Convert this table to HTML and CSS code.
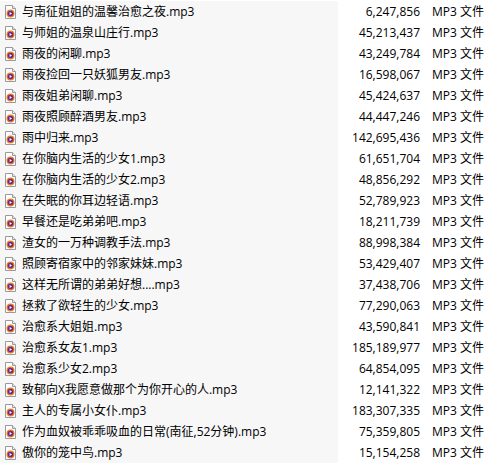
FILE: index.html
```html
<!DOCTYPE html>
<html>
<head>
<meta charset="utf-8">
<link rel="stylesheet" href="styles.css">
</head>
<body>
<svg width="0" height="0" class="defs">
  <defs>
    <symbol id="mp3" viewBox="0 0 11 14">
      <path d="M0.5 0.5 H7.5 L10.5 3.5 V13.5 H0.5 Z" fill="#fff" stroke="#9a9a9a"/>
      <path d="M7.5 0.5 V3.5 H10.5" fill="#e8e8e8" stroke="#9a9a9a"/>
      <circle cx="5.5" cy="8.5" r="4" fill="#f07a1c"/>
      <circle cx="5.5" cy="8.5" r="2.8" fill="#6a2a8a"/>
      <path d="M4.6 7 L7 8.5 L4.6 10 Z" fill="#fff"/>
    </symbol>
  </defs>
</svg>
<div class="list">
  <div class="row"><div class="name"><svg class="ic"><use href="#mp3"/></svg><span>与南征姐姐的温馨治愈之夜.mp3</span></div><div class="size">6,247,856</div><div class="type">MP3 文件</div></div>
  <div class="row"><div class="name"><svg class="ic"><use href="#mp3"/></svg><span>与师姐的温泉山庄行.mp3</span></div><div class="size">45,213,437</div><div class="type">MP3 文件</div></div>
  <div class="row"><div class="name"><svg class="ic"><use href="#mp3"/></svg><span>雨夜的闲聊.mp3</span></div><div class="size">43,249,784</div><div class="type">MP3 文件</div></div>
  <div class="row"><div class="name"><svg class="ic"><use href="#mp3"/></svg><span>雨夜捡回一只妖狐男友.mp3</span></div><div class="size">16,598,067</div><div class="type">MP3 文件</div></div>
  <div class="row"><div class="name"><svg class="ic"><use href="#mp3"/></svg><span>雨夜姐弟闲聊.mp3</span></div><div class="size">45,424,637</div><div class="type">MP3 文件</div></div>
  <div class="row"><div class="name"><svg class="ic"><use href="#mp3"/></svg><span>雨夜照顾醉酒男友.mp3</span></div><div class="size">44,447,246</div><div class="type">MP3 文件</div></div>
  <div class="row"><div class="name"><svg class="ic"><use href="#mp3"/></svg><span>雨中归来.mp3</span></div><div class="size">142,695,436</div><div class="type">MP3 文件</div></div>
  <div class="row"><div class="name"><svg class="ic"><use href="#mp3"/></svg><span>在你脑内生活的少女1.mp3</span></div><div class="size">61,651,704</div><div class="type">MP3 文件</div></div>
  <div class="row"><div class="name"><svg class="ic"><use href="#mp3"/></svg><span>在你脑内生活的少女2.mp3</span></div><div class="size">48,856,292</div><div class="type">MP3 文件</div></div>
  <div class="row"><div class="name"><svg class="ic"><use href="#mp3"/></svg><span>在失眠的你耳边轻语.mp3</span></div><div class="size">52,789,923</div><div class="type">MP3 文件</div></div>
  <div class="row"><div class="name"><svg class="ic"><use href="#mp3"/></svg><span>早餐还是吃弟弟吧.mp3</span></div><div class="size">18,211,739</div><div class="type">MP3 文件</div></div>
  <div class="row"><div class="name"><svg class="ic"><use href="#mp3"/></svg><span>渣女的一万种调教手法.mp3</span></div><div class="size">88,998,384</div><div class="type">MP3 文件</div></div>
  <div class="row"><div class="name"><svg class="ic"><use href="#mp3"/></svg><span>照顾寄宿家中的邻家妹妹.mp3</span></div><div class="size">53,429,407</div><div class="type">MP3 文件</div></div>
  <div class="row"><div class="name"><svg class="ic"><use href="#mp3"/></svg><span>这样无所谓的弟弟好想....mp3</span></div><div class="size">37,438,706</div><div class="type">MP3 文件</div></div>
  <div class="row"><div class="name"><svg class="ic"><use href="#mp3"/></svg><span>拯救了欲轻生的少女.mp3</span></div><div class="size">77,290,063</div><div class="type">MP3 文件</div></div>
  <div class="row"><div class="name"><svg class="ic"><use href="#mp3"/></svg><span>治愈系大姐姐.mp3</span></div><div class="size">43,590,841</div><div class="type">MP3 文件</div></div>
  <div class="row"><div class="name"><svg class="ic"><use href="#mp3"/></svg><span>治愈系女友1.mp3</span></div><div class="size">185,189,977</div><div class="type">MP3 文件</div></div>
  <div class="row"><div class="name"><svg class="ic"><use href="#mp3"/></svg><span>治愈系少女2.mp3</span></div><div class="size">64,854,095</div><div class="type">MP3 文件</div></div>
  <div class="row"><div class="name"><svg class="ic"><use href="#mp3"/></svg><span>致郁向X我愿意做那个为你开心的人.mp3</span></div><div class="size">12,141,322</div><div class="type">MP3 文件</div></div>
  <div class="row"><div class="name"><svg class="ic"><use href="#mp3"/></svg><span>主人的专属小女仆.mp3</span></div><div class="size">183,307,335</div><div class="type">MP3 文件</div></div>
  <div class="row"><div class="name"><svg class="ic"><use href="#mp3"/></svg><span>作为血奴被乖乖吸血的日常(南征,52分钟).mp3</span></div><div class="size">75,359,805</div><div class="type">MP3 文件</div></div>
  <div class="row"><div class="name"><svg class="ic"><use href="#mp3"/></svg><span>傲你的笼中鸟.mp3</span></div><div class="size">15,154,258</div><div class="type">MP3 文件</div></div>
</div>
</body>
</html>
```
FILE: styles.css
```css
html, body {
  margin: 0;
  padding: 0;
  background: #fff;
}
.defs {
  position: absolute;
  width: 0;
  height: 0;
}
.list {
  padding-top: 1px;
  font-family: "Open Sans", "Noto Sans CJK SC", sans-serif;
  font-size: 12px;
  color: #000;
}
.row {
  display: grid;
  grid-template-columns: 338px 82px 1fr;
  height: 21px;
  line-height: 21px;
}
.name {
  background: #f7f7f7;
  display: flex;
  align-items: center;
  padding-left: 5px;
  gap: 6px;
  white-space: nowrap;
  overflow: hidden;
}
.ic {
  width: 11px;
  height: 14px;
  flex: none;
}
.size {
  text-align: right;
}
.type {
  padding-left: 12px;
}
```
